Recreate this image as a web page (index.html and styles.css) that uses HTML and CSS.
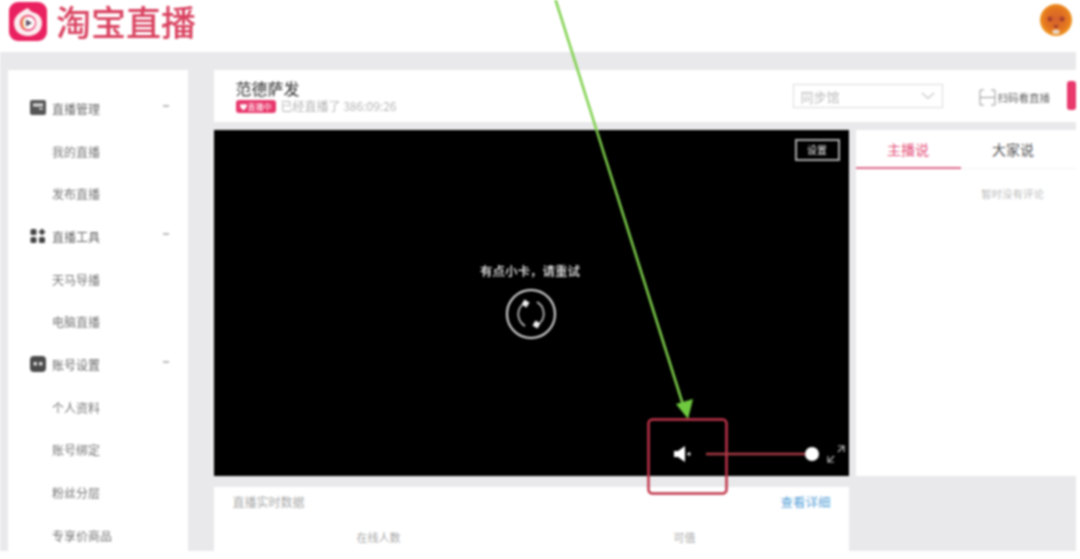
FILE: index.html
```html
<!DOCTYPE html>
<html lang="zh-CN">
<head>
    <meta charset="UTF-8">
    <title>淘宝直播</title>
    <link rel="stylesheet" href="styles.css">
</head>
<body>
    <div class="page">
        <!-- Header -->
        <header class="header">
            <div class="logo">
                <svg class="logo-icon" width="38" height="39" viewBox="0 0 38 39">
                    <rect width="38" height="39" rx="9" fill="#ea2160"/>
                    <path d="M19 5c2 3 4 4 7 5 5 2 7 6 7 10 0 8-6 13-14 13S5 28 5 20c0-6 5-11 14-15z" fill="#fbeef0" transform="translate(0 1)"/>
                    <circle cx="19" cy="21" r="8" fill="#ea2160"/>
                    <circle cx="19.500" cy="21" r="6.500" fill="#fff"/>
                    <path d="M12 21c0-4 3-7 6-7-3 2-4 4-3.500 7 0 3 1 5 3.500 7-3 0-6-3-6-7z" fill="#e8965a"/>
                    <path d="M17 17.500l6 3.500-6 3.500z" fill="#5a4a60"/>
                </svg>
                <span class="logo-text">淘宝直播</span>
            </div>
            <svg class="avatar" width="32" height="32" viewBox="0 0 32 32">
                <defs>
                    <radialGradient id="face" cx="50%" cy="48%" r="52%">
                        <stop offset="0" stop-color="#d4602c"/>
                        <stop offset="0.7" stop-color="#e4761f"/>
                        <stop offset="1" stop-color="#f09a20"/>
                    </radialGradient>
                </defs>
                <circle cx="16" cy="16" r="16" fill="url(#face)"/>
                <circle cx="10" cy="15" r="2.500" fill="#a8412a"/>
                <circle cx="22" cy="15" r="2.500" fill="#a8412a"/>
                <path d="M12 27c2-2 6-2 8 0l-1.500 3h-5z" fill="#e9d8c8"/>
                <path d="M13 21h6l-3 4z" fill="#a8412a"/>
            </svg>
        </header>

        <div class="main">
            <!-- Sidebar -->
            <nav class="sidebar">
                <div class="nav-item nav-group">
                    <svg class="nav-icon" width="16" height="16" viewBox="0 0 16 16"><rect width="16" height="15" rx="2" fill="#555"/><rect x="3" y="3.500" width="10" height="3" fill="#ddd"/><rect x="9" y="8" width="4" height="1.500" fill="#ddd"/></svg>
                    <span>直播管理</span><i class="caret"></i>
                </div>
                <div class="nav-item">我的直播</div>
                <div class="nav-item">发布直播</div>
                <div class="nav-item nav-group">
                    <svg class="nav-icon" width="16" height="16" viewBox="0 0 16 16"><rect x="0.500" y="1" width="6" height="6" rx="1.500" fill="#444"/><path d="M12 0.500l3.500 3.500-3.500 3.500-3.500-3.500z" fill="#444"/><rect x="0.500" y="9" width="6" height="6" rx="1.500" fill="#444"/><rect x="9" y="9" width="6" height="6" rx="1.500" fill="#444"/></svg>
                    <span>直播工具</span><i class="caret"></i>
                </div>
                <div class="nav-item">天马导播</div>
                <div class="nav-item">电脑直播</div>
                <div class="nav-item nav-group">
                    <svg class="nav-icon" width="16" height="16" viewBox="0 0 16 16"><rect width="16" height="16" rx="4" fill="#4a4a4a"/><rect x="3.500" y="6" width="3.500" height="3.500" rx="1" fill="#ddd"/><rect x="9" y="6" width="3.500" height="3.500" rx="1" fill="#ddd"/></svg>
                    <span>账号设置</span><i class="caret"></i>
                </div>
                <div class="nav-item">个人资料</div>
                <div class="nav-item">账号绑定</div>
                <div class="nav-item">粉丝分层</div>
                <div class="nav-item">专享价商品</div>
            </nav>

            <div class="content">
                <!-- Title bar -->
                <section class="topbar">
                    <div class="live-info">
                        <h1 class="live-title">范德萨发</h1>
                        <div class="live-status">
                            <span class="badge">♥直播中</span>
                            <span>已经直播了 386:09:26</span>
                        </div>
                    </div>
                    <div class="select">
                        <span>同步馆</span>
                        <svg width="14" height="8" viewBox="0 0 14 8"><path d="M1 1l6 5.500L13 1" fill="none" stroke="#c8c8c8" stroke-width="1.200"/></svg>
                    </div>
                    <div class="scan">
                        <svg width="17" height="17" viewBox="0 0 17 17"><path d="M5 1H1v15h4M12 1h4v15h-4M1 8.500h15" fill="none" stroke="#999" stroke-width="1"/></svg>
                        <span>扫码看直播</span>
                    </div>
                    <div class="end-btn"></div>
                </section>

                <div class="columns">
                    <div class="left-col">
                        <!-- Player -->
                        <section class="player">
                            <div class="player-top"><span class="settings-btn">设置</span></div>
                            <div class="player-msg">
                                <p>有点小卡，请重试</p>
                                <svg class="retry" width="52" height="52" viewBox="0 0 52 52">
                                    <circle cx="26" cy="26" r="24" fill="none" stroke="#ddd" stroke-width="2"/>
                                    <path d="M17 17a13.500 13.500 0 0 0 3 21M35 35a13.500 13.500 0 0 0-3-21" fill="none" stroke="#ccc" stroke-width="1.600"/>
                                    <path d="M19.500 11.500l5 3-3 5-5-3zM32.500 40.500l-5-3 3-5 5 3z" fill="#f0f0f0"/>
                                </svg>
                            </div>
                            <div class="player-bar">
                                <svg width="20" height="18" viewBox="0 0 20 18"><path d="M1 6h4l7-5v16l-7-5H1z" fill="#fff"/><circle cx="16" cy="9" r="1.800" fill="#ccc"/></svg>
                                <span class="volume"></span>
                                <svg class="fullscreen" width="20" height="20" viewBox="0 0 20 20"><path d="M12 2h6v6M18 2l-6 6M8 18H2v-6M2 18l6-6" fill="none" stroke="#bbb" stroke-width="1.200"/></svg>
                            </div>
                        </section>

                        <!-- Realtime data -->
                        <section class="data-panel">
                            <div class="data-head">
                                <span>直播实时数据</span>
                                <a class="data-link" href="#">查看详细</a>
                            </div>
                            <div class="data-cols">
                                <span>在线人数</span>
                                <span>可值</span>
                            </div>
                        </section>
                    </div>

                    <!-- Comments -->
                    <aside class="comments">
                        <div class="tabs">
                            <div class="tab active">主播说</div>
                            <div class="tab">大家说</div>
                        </div>
                        <p class="empty">暂时没有评论</p>
                    </aside>
                </div>
            </div>
        </div>

        <!-- Annotations drawn over the screenshot -->
        <svg class="annotations" width="1080" height="559" viewBox="0 0 1080 559">
            <line x1="555" y1="-2" x2="684" y2="408" stroke="#7ed04b" stroke-width="2.500"/>
            <path d="M676 404l17-5-5 20z" fill="#6fc93f"/>
            <rect x="648.500" y="419.500" width="78" height="74" rx="4" fill="none" stroke="#c0344a" stroke-width="2.500"/>
            <line x1="706" y1="454" x2="806" y2="454" stroke="#a83a44" stroke-width="2.500"/>
            <circle cx="812" cy="454" r="7" fill="#fff"/>
        </svg>
    </div>
</body>
</html>
```

FILE: styles.css
```css
* {
    margin: 0;
    padding: 0;
    box-sizing: border-box;
}

html, body {
    width: 1080px;
    height: 559px;
    overflow: hidden;
    background: #fff;
}

body {
    font-family: "Noto Sans CJK SC", "Liberation Sans", sans-serif;
    color: #666;
}

.page {
    position: relative;
    width: 1080px;
    height: 559px;
    filter: blur(0.8px);
}

/* Header */
.header {
    height: 52px;
    padding: 2px 8px 0 9px;
    display: flex;
    justify-content: space-between;
    align-items: flex-start;
}

.logo {
    display: flex;
    align-items: flex-start;
    gap: 9px;
}

.logo-text {
    margin-top: -6px;
    font-size: 35px;
    line-height: 50px;
    font-weight: 500;
    color: #d9415f;
}

.avatar {
    margin-top: 2px;
}

/* Layout */
.main {
    height: 499px;
    width: 1076px;
    padding: 18px 0 0 8px;
    background: #e9e9eb;
    display: flex;
    gap: 26px;
}

.sidebar {
    width: 180px;
    padding-top: 17px;
    background: #fff;
    font-size: 12px;
    color: #777;
}

.nav-item {
    height: 42.700px;
    padding-left: 44px;
    display: flex;
    align-items: center;
}

.nav-group {
    position: relative;
    padding-left: 22px;
    gap: 6px;
    color: #666;
}

.caret {
    position: absolute;
    left: 155px;
    top: 18px;
    width: 6px;
    height: 2px;
    background: #bbb;
}

.content {
    flex: 1;
    display: flex;
    flex-direction: column;
    gap: 8px;
}

/* Title bar */
.topbar {
    height: 52px;
    padding: 8px 0 0 22px;
    background: #fff;
    display: flex;
    align-items: flex-start;
}

.live-info {
    flex: 0 0 557px;
}

.live-title {
    font-size: 16px;
    line-height: 21px;
    font-weight: 400;
    color: #333;
}

.live-status {
    display: flex;
    align-items: center;
    gap: 5px;
    font-size: 12px;
    line-height: 14px;
    color: #b5b5b5;
}

.badge {
    width: 40px;
    height: 13px;
    border-radius: 3px;
    background: #e8386c;
    color: #fff;
    font-size: 8px;
    line-height: 13px;
    text-align: center;
}

.select {
    flex: 0 0 150px;
    height: 24px;
    margin-top: 6px;
    padding: 0 7px;
    border: 1px solid #ddd;
    display: flex;
    justify-content: space-between;
    align-items: center;
    font-size: 13px;
    color: #bbb;
}

.scan {
    flex: none;
    margin: 11px 0 0 36px;
    display: flex;
    align-items: center;
    gap: 2px;
    font-size: 10.500px;
    white-space: nowrap;
    color: #666;
}

.end-btn {
    flex: none;
    width: 9px;
    height: 29px;
    margin: 3px 0 0 17px;
    border-radius: 3px;
    background: #e8386c;
}

.columns {
    flex: 1;
    display: flex;
    gap: 7px;
}

.left-col {
    flex: 0 0 635px;
    display: flex;
    flex-direction: column;
    gap: 11px;
}

/* Player */
.player {
    height: 346px;
    background: #000;
    color: #eee;
    display: flex;
    flex-direction: column;
}

.player-top {
    height: 111px;
    padding: 9px 9px 0 0;
    display: flex;
    justify-content: flex-end;
    align-items: flex-start;
}

.settings-btn {
    width: 45px;
    height: 22px;
    border: 2px solid #aaa;
    font-size: 10px;
    line-height: 18px;
    text-align: center;
}

.player-msg {
    height: 100px;
    display: flex;
    flex-direction: column;
    align-items: center;
    gap: 8px;
    padding-top: 21px;
    font-size: 12.500px;
    font-weight: 500;
    line-height: 18px;
}

.player-msg p {
    margin-right: 2px;
}

.retry {
    flex: none;
}

.player-bar {
    flex: 1;
    padding: 104px 0 0 459px;
    display: flex;
    align-items: flex-start;
}

.player-bar .volume {
    width: 126px;
}

.fullscreen {
    margin-top: -1px;
    margin-left: 7px;
}

/* Realtime data */
.data-panel {
    flex: 1;
    padding: 6px 18px 0 19px;
    background: #fff;
    font-size: 12px;
    color: #aaa;
}

.data-head {
    display: flex;
    justify-content: space-between;
    line-height: 18px;
}

.data-link {
    color: #5ea6da;
    font-size: 12.500px;
    text-decoration: none;
}

.data-cols {
    display: flex;
    gap: 273px;
    margin-top: 18px;
    padding-left: 124px;
    font-size: 11px;
    line-height: 16px;
}

/* Comments */
.comments {
    flex: 0 0 220px;
    height: 346px;
    background: #fff;
}

.tabs {
    display: flex;
    height: 39px;
}

.tab {
    flex: 1;
    padding-right: 10px;
    text-align: center;
    font-size: 14px;
    line-height: 38px;
    color: #555;
    border-bottom: 1px solid #f2f2f2;
}

.tab.active {
    flex: 0 0 105px;
    padding-right: 0;
    color: #e5517a;
    border-bottom: 2px solid #dc6a88;
}

.empty {
    margin-top: 17px;
    padding-left: 94px;
    text-align: center;
    font-size: 10.500px;
    line-height: 16px;
    color: #c0c0c0;
}

/* Annotations */
.annotations {
    position: absolute;
    left: 0;
    top: 0;
    pointer-events: none;
}
```
